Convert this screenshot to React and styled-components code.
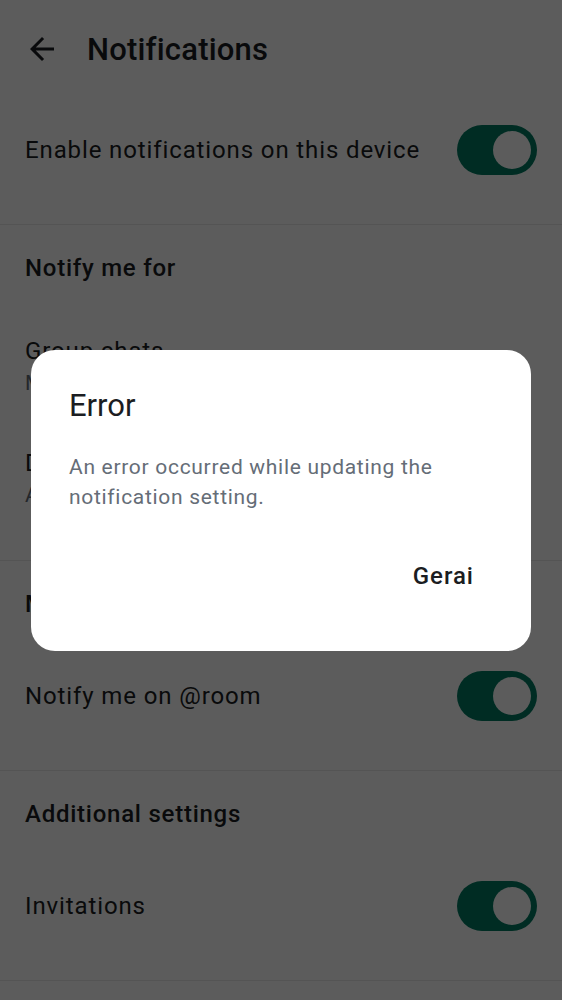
import React from "react";
import styled, { createGlobalStyle } from "styled-components";

const GlobalStyle = createGlobalStyle`
  * { box-sizing: border-box; }
  html, body {
    margin: 0;
    padding: 0;
    background: #ffffff;
  }
  body {
    font-family: Roboto, "Liberation Sans", sans-serif;
    color: #1b1d22;
    -webkit-font-smoothing: antialiased;
  }
`;

const Screen = styled.div`
  display: flex;
  flex-direction: column;
  min-height: 100vh;
  background: #ffffff;
`;

const TopBar = styled.header`
  display: flex;
  align-items: center;
  height: 98px;
  padding-left: 24px;
  gap: 27px;
`;

const BackButton = styled.button`
  display: flex;
  align-items: center;
  justify-content: center;
  width: 36px;
  height: 36px;
  padding: 0;
  border: none;
  background: none;
  color: #1b1d22;
`;

const Title = styled.h1`
  margin: 0;
  font-size: 31px;
  font-weight: 500;
  letter-spacing: 0.2px;
`;

const Section = styled.section`
  padding-top: ${(p) => (p.$first ? "3px" : "0")};
  padding-bottom: 25px;
  border-bottom: 1px solid #e9e9e9;
`;

const SectionHeader = styled.h2`
  display: flex;
  align-items: center;
  height: 86px;
  margin: 0;
  padding: 0 25px;
  font-size: 24px;
  font-weight: 500;
  letter-spacing: 0.75px;
`;

const Row = styled.div`
  display: flex;
  align-items: center;
  justify-content: space-between;
  height: ${(p) => (p.$twoLine ? "112px" : "98px")};
  padding: 0 25px;
`;

const RowText = styled.div`
  display: flex;
  flex-direction: column;
`;

const RowTitle = styled.span`
  font-size: 24px;
  line-height: 32px;
  letter-spacing: 0.88px;
  color: #1b1d22;
`;

const RowSubtitle = styled.span`
  font-size: 21px;
  line-height: 32px;
  letter-spacing: 0.6px;
  color: #656d77;
`;

const Track = styled.span`
  display: flex;
  align-items: center;
  justify-content: ${(p) => (p.$on ? "flex-end" : "flex-start")};
  width: 80px;
  height: 50px;
  padding: 0 6px;
  border-radius: 25px;
  background: ${(p) => (p.$on ? "#007a61" : "#e1e6ec")};
  flex-shrink: 0;
`;

const Thumb = styled.span`
  width: 38px;
  height: 38px;
  border-radius: 50%;
  background: #ffffff;
`;

const Switch = ({ on }) => (
  <Track $on={on}>
    <Thumb />
  </Track>
);

const Scrim = styled.div`
  position: fixed;
  inset: 0;
  display: flex;
  align-items: center;
  justify-content: center;
  background: rgba(0, 0, 0, 0.64);
`;

const Dialog = styled.div`
  display: flex;
  flex-direction: column;
  width: 500px;
  height: 301px;
  padding: 36px 36px 0 38px;
  border-radius: 24px;
  background: #ffffff;
`;

const DialogTitle = styled.h3`
  margin: 0;
  font-size: 31px;
  line-height: 40px;
  font-weight: 400;
  color: #1b1d22;
`;

const DialogBody = styled.p`
  margin: 26px 0 0 0;
  font-size: 21px;
  line-height: 30px;
  letter-spacing: 0.7px;
  color: #656d77;
`;

const DialogActions = styled.div`
  display: flex;
  justify-content: flex-end;
  margin-top: 34px;
`;

const TextButton = styled.button`
  height: 60px;
  padding: 0 21px;
  border: none;
  background: none;
  font-family: inherit;
  font-size: 24px;
  font-weight: 500;
  letter-spacing: 1px;
  color: #1b1d22;
`;

const BackArrow = () => (
  <svg width="36" height="36" viewBox="0 0 24 24" fill="currentColor">
    <path d="M20 11H7.83l5.59-5.59L12 4l-8 8 8 8 1.41-1.41L7.83 13H20v-2z" />
  </svg>
);

const App = () => {
  return (
    <>
      <GlobalStyle />
      <Screen>
        <TopBar>
          <BackButton aria-label="Back">
            <BackArrow />
          </BackButton>
          <Title>Notifications</Title>
        </TopBar>

        <Section $first>
          <Row>
            <RowTitle>Enable notifications on this device</RowTitle>
            <Switch on />
          </Row>
        </Section>

        <Section>
          <SectionHeader>Notify me for</SectionHeader>
          <Row $twoLine>
            <RowText>
              <RowTitle>Group chats</RowTitle>
              <RowSubtitle>Mentions and keywords</RowSubtitle>
            </RowText>
          </Row>
          <Row $twoLine>
            <RowText>
              <RowTitle>Direct chats</RowTitle>
              <RowSubtitle>All messages</RowSubtitle>
            </RowText>
          </Row>
        </Section>

        <Section>
          <SectionHeader>Mentions</SectionHeader>
          <Row>
            <RowTitle>Notify me on @room</RowTitle>
            <Switch on />
          </Row>
        </Section>

        <Section>
          <SectionHeader>Additional settings</SectionHeader>
          <Row>
            <RowTitle>Invitations</RowTitle>
            <Switch on />
          </Row>
        </Section>
      </Screen>

      <Scrim>
        <Dialog role="alertdialog">
          <DialogTitle>Error</DialogTitle>
          <DialogBody>
            An error occurred while updating the notification setting.
          </DialogBody>
          <DialogActions>
            <TextButton>Gerai</TextButton>
          </DialogActions>
        </Dialog>
      </Scrim>
    </>
  );
};

export default App;
